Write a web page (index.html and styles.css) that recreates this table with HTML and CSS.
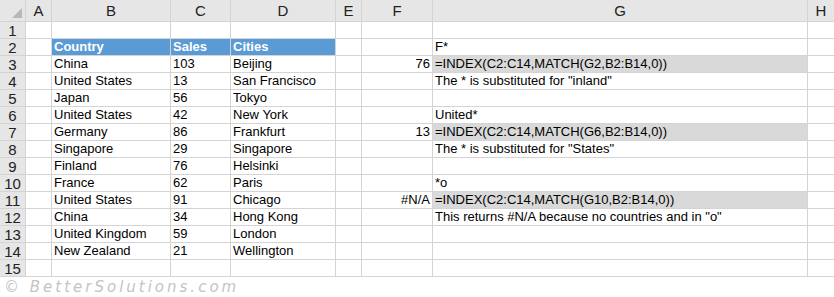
FILE: index.html
```html
<!DOCTYPE html>
<html lang="en">
<head>
<meta charset="UTF-8">
<title>INDEX MATCH wildcards</title>
<link rel="stylesheet" href="styles.css">
</head>
<body>
<div class="sheet">
    <!-- column headers -->
    <div class="hd corner"><span class="tri"></span></div>
    <div class="hd">A</div><div class="hd">B</div><div class="hd">C</div><div class="hd">D</div>
    <div class="hd">E</div><div class="hd">F</div><div class="hd">G</div><div class="hd">H</div>

    <div class="hd rn">1</div><div></div><div></div><div></div><div></div><div></div><div></div><div></div><div></div>

    <div class="hd rn">2</div><div></div>
    <div class="th">Country</div><div class="th">Sales</div><div class="th">Cities</div>
    <div></div><div></div><div>F*</div><div></div>

    <div class="hd rn">3</div><div></div><div>China</div><div>103</div><div>Beijing</div>
    <div></div><div class="num">76</div><div class="fx">=INDEX(C2:C14,MATCH(G2,B2:B14,0))</div><div></div>

    <div class="hd rn">4</div><div></div><div>United States</div><div>13</div><div>San Francisco</div>
    <div></div><div></div><div>The * is substituted for "inland"</div><div></div>

    <div class="hd rn">5</div><div></div><div>Japan</div><div>56</div><div>Tokyo</div>
    <div></div><div></div><div></div><div></div>

    <div class="hd rn">6</div><div></div><div>United States</div><div>42</div><div>New York</div>
    <div></div><div></div><div>United*</div><div></div>

    <div class="hd rn">7</div><div></div><div>Germany</div><div>86</div><div>Frankfurt</div>
    <div></div><div class="num">13</div><div class="fx">=INDEX(C2:C14,MATCH(G6,B2:B14,0))</div><div></div>

    <div class="hd rn">8</div><div></div><div>Singapore</div><div>29</div><div>Singapore</div>
    <div></div><div></div><div>The * is substituted for "States"</div><div></div>

    <div class="hd rn">9</div><div></div><div>Finland</div><div>76</div><div>Helsinki</div>
    <div></div><div></div><div></div><div></div>

    <div class="hd rn">10</div><div></div><div>France</div><div>62</div><div>Paris</div>
    <div></div><div></div><div>*o</div><div></div>

    <div class="hd rn">11</div><div></div><div>United States</div><div>91</div><div>Chicago</div>
    <div></div><div class="num">#N/A</div><div class="fx">=INDEX(C2:C14,MATCH(G10,B2:B14,0))</div><div></div>

    <div class="hd rn">12</div><div></div><div>China</div><div>34</div><div>Hong Kong</div>
    <div></div><div></div><div>This returns #N/A because no countries and in "o"</div><div></div>

    <div class="hd rn">13</div><div></div><div>United Kingdom</div><div>59</div><div>London</div>
    <div></div><div></div><div></div><div></div>

    <div class="hd rn">14</div><div></div><div>New Zealand</div><div>21</div><div>Wellington</div>
    <div></div><div></div><div></div><div></div>

    <div class="hd rn">15</div><div></div><div></div><div></div><div></div><div></div><div></div><div></div><div></div>
</div>
<div class="credit">© BetterSolutions.com</div>
</body>
</html>
```

FILE: styles.css
```css
body {
    margin: 0;
    background: #fff;
    font-family: "Liberation Sans", Arial, sans-serif;
    font-size: 13px;
    color: #000;
}
.sheet {
    display: grid;
    grid-template-columns: 25px 25px 118px 59px 104px 25px 70px 374px 26px;
    grid-template-rows: 21px repeat(15, 16px);
    gap: 1px;
    padding-bottom: 1px;
    background: #d4d4d4;
    width: 834px;
}
.sheet > div {
    background: #fff;
    line-height: 16px;
    padding: 0 2px;
    white-space: nowrap;
    overflow: hidden;
}
.sheet > .hd {
    background: #e6e6e6;
    color: #222;
    font-size: 15px;
    text-align: center;
    line-height: 21px;
    padding: 0;
}
.sheet > .rn {
    line-height: 17px;
}
.sheet > .corner {
    display: flex;
    justify-content: flex-end;
    align-items: flex-end;
    padding: 0 3px 3px 0;
}
.tri {
    width: 10px;
    height: 10px;
    background: #b8b8b8;
    clip-path: polygon(100% 0, 100% 100%, 0 100%);
}
.sheet > .th {
    background: #5b9bd5;
    color: #fff;
    font-weight: bold;
}
.sheet > .num {
    text-align: right;
}
.sheet > .fx {
    background: #d9d9d9;
}
.credit {
    padding: 1px 0 0 4px;
    font-family: "DejaVu Sans", sans-serif;
    font-style: italic;
    font-size: 15px;
    letter-spacing: 3px;
    color: #c4c4c4;
}
```
